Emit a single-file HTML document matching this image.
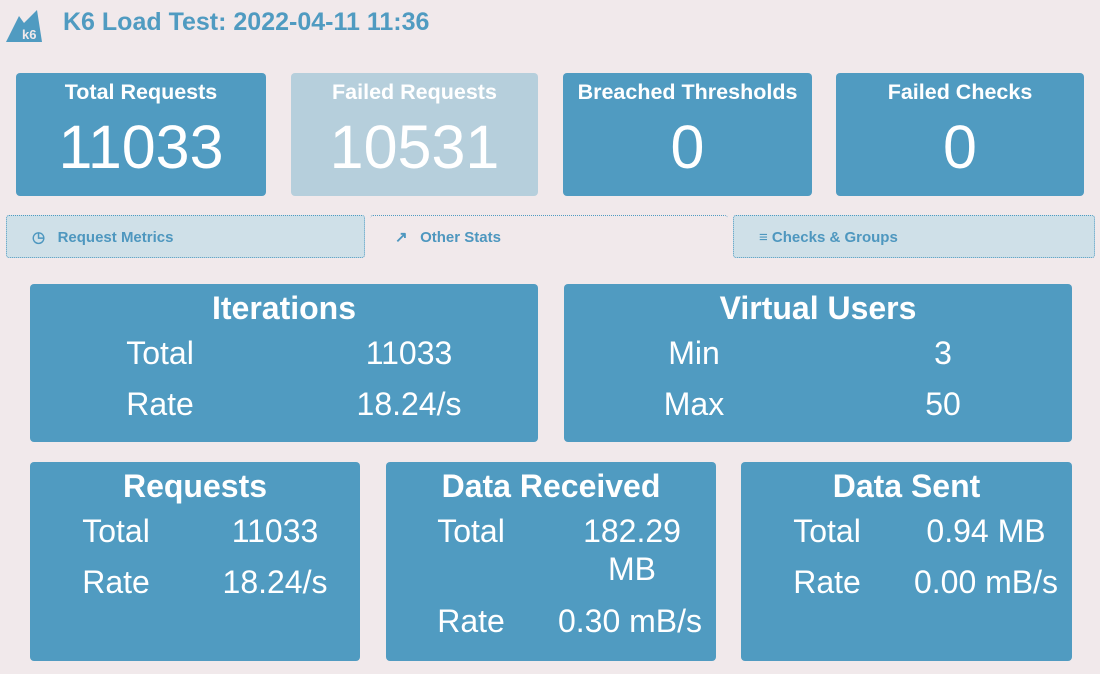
<!DOCTYPE html>
<html><head><meta charset="utf-8"><style>
*{margin:0;padding:0;box-sizing:border-box}
body{width:1100px;height:674px;background:#f1e9eb;font-family:"Liberation Sans",Arial,sans-serif;position:relative;overflow:hidden;color:#fff}
.a{position:absolute}
.card{position:absolute;top:73px;height:123px;background:#509bc1;border-radius:4px;text-align:center}
.card .t{font-weight:bold;font-size:21.5px;margin-top:7px;line-height:24px}
.card .n{font-size:61px;line-height:66px;margin-top:10px}
.tab{position:absolute;top:215px;height:43px;font-weight:bold;font-size:15px;color:#4e97bf;line-height:43px;border-radius:3px}
.p{position:absolute;background:#509bc1;border-radius:4px}
.p .h{position:absolute;left:0;right:0;text-align:center;font-weight:bold;font-size:32px;top:6px}
.c{position:absolute;font-size:32px;transform:translateX(-50%);white-space:nowrap;text-align:center;line-height:38px}
</style></head><body>
<svg class="a" style="left:5px;top:10px" width="37" height="33" viewBox="0 0 37 33"><path d="M1 32 L14 6 L19 13 L32 0 L37 32 Z" fill="#509bc1"/><text x="17" y="29" font-family="Liberation Sans" font-weight="bold" font-size="13" fill="#f1e9eb">k6</text></svg>
<div class="a" style="left:63px;top:8px;font-size:25px;font-weight:bold;color:#509bc1">K6 Load Test: 2022-04-11 11:36</div>

<div class="card" style="left:16px;width:250px"><div class="t">Total Requests</div><div class="n">11033</div></div>
<div class="card" style="left:291px;width:247px;background:#b6cfdc"><div class="t">Failed Requests</div><div class="n">10531</div></div>
<div class="card" style="left:563px;width:249px"><div class="t">Breached Thresholds</div><div class="n">0</div></div>
<div class="card" style="left:836px;width:248px"><div class="t">Failed Checks</div><div class="n">0</div></div>

<div class="tab" style="left:6px;width:359px;background:#cfe0e8;border:1px dotted #509bc1;padding-left:25px">&#9719;&nbsp;&nbsp; Request Metrics</div>
<div class="tab" style="left:370px;width:358px;border-top:1px dotted #509bc1;padding-left:25px">&#8599;&nbsp;&nbsp; Other Stats</div>
<div class="tab" style="left:733px;width:362px;background:#cfe0e8;border:1px dotted #509bc1;padding-left:25px">&#8801; Checks &amp; Groups</div>

<div class="p" style="left:30px;top:284px;width:508px;height:158px"><div class="h">Iterations</div>
<div class="c" style="left:130px;top:50px">Total</div><div class="c" style="left:379px;top:50px">11033</div>
<div class="c" style="left:130px;top:101px">Rate</div><div class="c" style="left:379px;top:101px">18.24/s</div></div>
<div class="p" style="left:564px;top:284px;width:508px;height:158px"><div class="h">Virtual Users</div>
<div class="c" style="left:130px;top:50px">Min</div><div class="c" style="left:379px;top:50px">3</div>
<div class="c" style="left:130px;top:101px">Max</div><div class="c" style="left:379px;top:101px">50</div></div>

<div class="p" style="left:30px;top:462px;width:330px;height:199px"><div class="h">Requests</div>
<div class="c" style="left:86px;top:50px">Total</div><div class="c" style="left:245px;top:50px">11033</div>
<div class="c" style="left:86px;top:101px">Rate</div><div class="c" style="left:245px;top:101px">18.24/s</div></div>
<div class="p" style="left:386px;top:462px;width:330px;height:199px"><div class="h">Data Received</div>
<div class="c" style="left:85px;top:50px">Total</div><div class="c" style="left:246px;top:50px">182.29<br>MB</div>
<div class="c" style="left:85px;top:140px">Rate</div><div class="c" style="left:244px;top:140px">0.30 mB/s</div></div>
<div class="p" style="left:741px;top:462px;width:331px;height:199px"><div class="h">Data Sent</div>
<div class="c" style="left:86px;top:50px">Total</div><div class="c" style="left:245px;top:50px">0.94 MB</div>
<div class="c" style="left:86px;top:101px">Rate</div><div class="c" style="left:245px;top:101px">0.00 mB/s</div></div>
</body></html>
